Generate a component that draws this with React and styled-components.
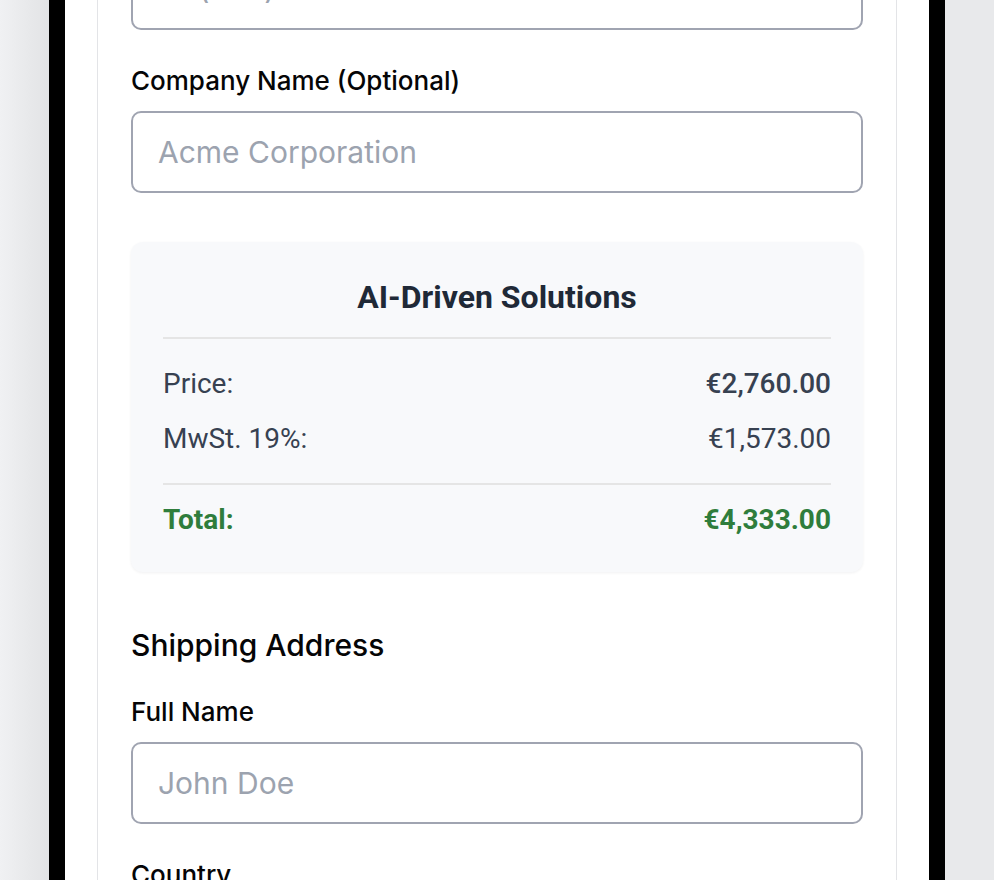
import React from "react";
import styled, { createGlobalStyle } from "styled-components";

const Global = createGlobalStyle`
  html, body { margin: 0; padding: 0; height: 880px; overflow: hidden; }
  body {
    font-family: Inter, Roboto, "Noto Sans", Arial, sans-serif;
    background: linear-gradient(90deg, #f0f1f3 0px, #e2e3e5 49px, #e8e9eb 49px);
  }
  * { box-sizing: border-box; }
`;

const Page = styled.div`
  display: flex;
  justify-content: center;
  padding: 0 49px;
  height: 880px;
`;

const Phone = styled.div`
  flex: 1;
  background: #ffffff;
  border-left: 16px solid #000;
  border-right: 16px solid #000;
  padding: 0 32px;
  overflow: hidden;
`;

const Card = styled.div`
  border-left: 1px solid #e3e4e7;
  border-right: 1px solid #e3e4e7;
  background: #fff;
  padding: 0 33px;
  margin-top: -100px;
  min-height: 1200px;
`;

const Field = styled.div`
  margin-bottom: 33px;
`;

const Label = styled.label`
  display: block;
  font-family: Inter, Arial, sans-serif;
  font-size: 26px;
  font-weight: 500;
  line-height: 36px;
  color: #050506;
  margin-bottom: 12px;
`;

const Input = styled.input`
  display: block;
  width: 100%;
  height: 82px;
  border: 2px solid #a0a4b1;
  border-radius: 10px;
  padding: 0 25px;
  font-family: Inter, Arial, sans-serif;
  font-size: 30px;
  color: #111827;
  background: #fff;
  outline: none;
  &::placeholder { color: #9ca3af; }
`;

const Summary = styled.section`
  margin-top: 49px;
  background: #f8f9fb;
  border-radius: 12px;
  box-shadow: 0 1px 3px rgba(15, 23, 42, 0.06);
  padding: 36px 32px 33px;
  font-family: Roboto, Arial, sans-serif;
`;

const SummaryTitle = styled.h3`
  margin: 0;
  text-align: center;
  font-size: 32px;
  font-weight: 700;
  line-height: 38px;
  color: #1f2937;
`;

const Divider = styled.hr`
  border: none;
  height: 2px;
  background: #e5e5e5;
  margin: ${(p) => p.$m};
`;

const Row = styled.div`
  display: flex;
  justify-content: space-between;
  align-items: baseline;
  font-size: 28px;
  line-height: 39px;
  color: ${(p) => (p.$total ? "#2f7d3c" : "#374151")};
  font-weight: ${(p) => (p.$total ? 700 : 400)};
  margin-bottom: ${(p) => p.$mb || "0"};
`;

const Value = styled.span`
  font-weight: ${(p) => p.$w || 400};
`;

const SectionTitle = styled.h2`
  margin: 55px 0 31px;
  font-family: Inter, Arial, sans-serif;
  font-size: 30px;
  font-weight: 500;
  line-height: 36px;
  color: #050506;
`;

export default function App() {
  return (
    <>
      <Global />
      <Page>
        <Phone>
          <Card>
            <Field>
              <Label>Phone Number</Label>
              <Input placeholder="+1 (555) 000-0000" />
            </Field>
            <Field>
              <Label>Company Name (Optional)</Label>
              <Input placeholder="Acme Corporation" />
            </Field>
            <Summary>
              <SummaryTitle>AI-Driven Solutions</SummaryTitle>
              <Divider $m="21px 0 25px" />
              <Row $mb="16px">
                <span>Price:</span>
                <Value $w={500}>€2,760.00</Value>
              </Row>
              <Row>
                <span>MwSt. 19%:</span>
                <Value>€1,573.00</Value>
              </Row>
              <Divider $m="25px 0 15px" />
              <Row $total>
                <span>Total:</span>
                <Value $w={700}>€4,333.00</Value>
              </Row>
            </Summary>
            <SectionTitle>Shipping Address</SectionTitle>
            <Field>
              <Label>Full Name</Label>
              <Input placeholder="John Doe" />
            </Field>
            <Field>
              <Label>Country</Label>
              <Input placeholder="Germany" />
            </Field>
          </Card>
        </Phone>
      </Page>
    </>
  );
}
